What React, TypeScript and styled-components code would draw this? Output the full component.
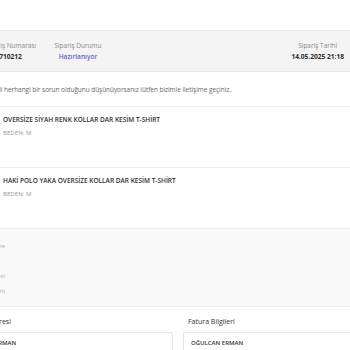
import React from "react";
import styled, { createGlobalStyle } from "styled-components";

const Global = createGlobalStyle`
  html, body { margin: 0; padding: 0; background: #fff; overflow: hidden; }
  body { font-family: "Open Sans", "Noto Sans", sans-serif; color: #333; }
  * { box-sizing: border-box; }
`;

const Page = styled.div`
  width: 460px;
  margin-left: -100px;
  padding-top: 30px;
`;

const Header = styled.div`
  display: flex;
  align-items: center;
  height: 42px;
  background: #f4f4f4;
  border-top: 1px solid #e8e8e8;
  border-bottom: 1px solid #e8e8e8;
  padding: 0 16px 0 73px;
`;

const InfoBlock = styled.div<{ $w?: number; $push?: boolean }>`
  width: ${(p) => (p.$w ? `${p.$w}px` : "auto")};
  text-align: center;
  margin-left: ${(p) => (p.$push ? "auto" : "0")};
  display: flex;
  flex-direction: column;
  gap: 2px;
`;

const Label = styled.span`
  font-size: 6.5px;
  color: #8a8a8a;
`;

const Value = styled.span<{ $blue?: boolean }>`
  font-size: 6.6px;
  font-weight: ${(p) => (p.$blue ? 600 : 700)};
  color: ${(p) => (p.$blue ? "#5b63d9" : "#2b2b2b")};
`;

const Notice = styled.div`
  height: 35px;
  display: flex;
  align-items: center;
  padding-left: 54px;
  border-bottom: 1px solid #ececec;
  font-size: 6.4px;
  color: #666;
`;

const Item = styled.div`
  display: flex;
  gap: 10px;
  height: 61px;
  padding: 8px 0 0 48px;
  border-bottom: 1px solid #ececec;
`;

const Thumb = styled.div`
  width: 45px;
  height: 45px;
  background: #eee;
`;

const ItemInfo = styled.div`
  display: flex;
  flex-direction: column;
  align-items: flex-start;
  gap: 4px;
`;

const ItemTitle = styled.span`
  font-size: 6.5px;
  font-weight: 600;
  color: #2f2f2f;
`;

const ItemSize = styled.span`
  font-size: 6.1px;
  color: #9a9a9a;
`;

const Summary = styled.div`
  height: 78px;
  background: #f9f9f9;
  border-bottom: 1px solid #ededed;
  padding: 13px 0 0 0;
`;

const SummaryCol = styled.div`
  width: 105px;
  display: flex;
  flex-direction: column;
  align-items: flex-end;
  font-size: 6px;
  color: #b0b0b0;
`;

const SummaryLine = styled.span<{ $mt: number }>`
  margin-top: ${(p) => p.$mt}px;
`;

const Addresses = styled.div`
  display: grid;
  grid-template-columns: 217px 217px;
  column-gap: 10px;
  padding: 10px 0 0 56px;
`;

const AddrCol = styled.div`
  display: flex;
  flex-direction: column;
  gap: 6px;
`;

const AddrTitle = styled.span`
  font-size: 7px;
  font-weight: 500;
  color: #333;
  padding-left: 5px;
`;

const AddrBox = styled.div`
  border: 1px solid #e6e6e6;
  border-radius: 2px;
  height: 40px;
  padding: 6px 7px;
  font-size: 6px;
  font-weight: 600;
  color: #333;
`;

export default function App() {
  return (
    <>
      <Global />
      <Page>
        <Header>
          <InfoBlock $w={75}>
            <Label>Sipariş Numarası</Label>
            <Value>710212</Value>
          </InfoBlock>
          <InfoBlock $w={60}>
            <Label>Sipariş Durumu</Label>
            <Value $blue>Hazırlanıyor</Value>
          </InfoBlock>
          <InfoBlock $push>
            <Label>Sipariş Tarihi</Label>
            <Value>14.05.2025 21:18</Value>
          </InfoBlock>
        </Header>
        <Notice>
          Siparişinizle ilgili herhangi bir sorun olduğunu düşünüyorsanız lütfen bizimle iletişime geçiniz..
        </Notice>
        <Item>
          <Thumb />
          <ItemInfo>
            <ItemTitle>OVERSİZE SİYAH RENK KOLLAR DAR KESİM T-SHİRT</ItemTitle>
            <ItemSize>BEDEN: M</ItemSize>
          </ItemInfo>
        </Item>
        <Item>
          <Thumb />
          <ItemInfo>
            <ItemTitle>HAKİ POLO YAKA OVERSİZE KOLLAR DAR KESİM T-SHİRT</ItemTitle>
            <ItemSize>BEDEN: M</ItemSize>
          </ItemInfo>
        </Item>
        <Summary>
          <SummaryCol>
            <SummaryLine $mt={0}>Kredi Kartı ile Ödeme</SummaryLine>
            <SummaryLine $mt={22}>Satış Sözleşmesi</SummaryLine>
            <SummaryLine $mt={7}>Ön Bilgilendirme Metni</SummaryLine>
          </SummaryCol>
        </Summary>
        <Addresses>
          <AddrCol>
            <AddrTitle>Teslimat Adresi</AddrTitle>
            <AddrBox>OĞULCAN ERMAN</AddrBox>
          </AddrCol>
          <AddrCol>
            <AddrTitle>Fatura Bilgileri</AddrTitle>
            <AddrBox>OĞULCAN ERMAN</AddrBox>
          </AddrCol>
        </Addresses>
      </Page>
    </>
  );
}
